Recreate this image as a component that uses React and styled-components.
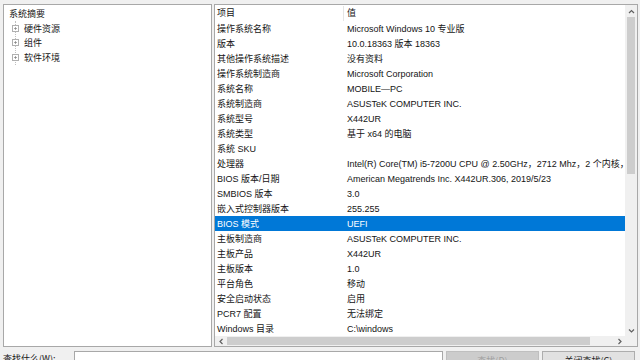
import styled, { createGlobalStyle } from "styled-components";

const GlobalStyle = createGlobalStyle`
  html, body {
    margin: 0;
    padding: 0;
    background: #f0f0f0;
    overflow: hidden;
  }
  body {
    font-family: "Liberation Sans", "Noto Sans CJK SC", sans-serif;
    font-size: 9px;
    color: #141414;
  }
`;

const rows = [
  ["操作系统名称", "Microsoft Windows 10 专业版"],
  ["版本", "10.0.18363 版本 18363"],
  ["其他操作系统描述", "没有资料"],
  ["操作系统制造商", "Microsoft Corporation"],
  ["系统名称", "MOBILE—PC"],
  ["系统制造商", "ASUSTeK COMPUTER INC."],
  ["系统型号", "X442UR"],
  ["系统类型", "基于 x64 的电脑"],
  ["系统 SKU", ""],
  ["处理器", "Intel(R) Core(TM) i5-7200U CPU @ 2.50GHz，2712 Mhz，2 个内核，4 个逻辑处理器"],
  ["BIOS 版本/日期", "American Megatrends Inc. X442UR.306, 2019/5/23"],
  ["SMBIOS 版本", "3.0"],
  ["嵌入式控制器版本", "255.255"],
  ["BIOS 模式", "UEFI"],
  ["主板制造商", "ASUSTeK COMPUTER INC."],
  ["主板产品", "X442UR"],
  ["主板版本", "1.0"],
  ["平台角色", "移动"],
  ["安全启动状态", "启用"],
  ["PCR7 配置", "无法绑定"],
  ["Windows 目录", "C:\\windows"],
];

const treeItems = ["硬件资源", "组件", "软件环境"];

const chevrons = {
  up: "M2 6 L4.5 3.5 L7 6",
  down: "M2 3.5 L4.5 6 L7 3.5",
  left: "M5.5 2 L3 4.5 L5.5 7",
  right: "M3.5 2 L6 4.5 L3.5 7",
};

function ScrollArrow({ dir }) {
  return (
    <Arrow>
      <svg width="9" height="9" viewBox="0 0 9 9">
        <path d={chevrons[dir]} fill="none" stroke="#606060" strokeWidth="1.2" />
      </svg>
    </Arrow>
  );
}

export default function App() {
  return (
    <Window>
      <GlobalStyle />
      <Main>
        <TreePanel>
          <TreeRoot>系统摘要</TreeRoot>
          <TreeChildren>
            {treeItems.map((t) => (
              <TreeRow key={t}>
                <Expander>
                  <svg width="5" height="5" viewBox="0 0 5 5">
                    <path d="M0 2.5 H5 M2.5 0 V5" stroke="#707070" strokeWidth="1" />
                  </svg>
                </Expander>
                <TreeLabel>{t}</TreeLabel>
              </TreeRow>
            ))}
          </TreeChildren>
        </TreePanel>

        <ListPanel>
          <ListBody>
            <Table>
              <HeaderRow>
                <NameCell>项目</NameCell>
                <HeaderValue>值</HeaderValue>
              </HeaderRow>
              {rows.map(([name, value]) => (
                <Row key={name} $selected={name === "BIOS 模式"}>
                  <NameCell>{name}</NameCell>
                  <ValueCell>{value}</ValueCell>
                </Row>
              ))}
            </Table>
            <VScroll>
              <ScrollArrow dir="up" />
              <VTrack>
                <VThumb />
              </VTrack>
              <ScrollArrow dir="down" />
            </VScroll>
          </ListBody>
          <HScrollRow>
            <HScroll>
              <ScrollArrow dir="left" />
              <HTrack>
                <HThumb />
              </HTrack>
              <ScrollArrow dir="right" />
            </HScroll>
            <Corner />
          </HScrollRow>
        </ListPanel>
      </Main>

      <FindBar>
        <FindLabel>查找什么(W):</FindLabel>
        <FindInput />
        <FindButton $disabled>查找(D)</FindButton>
        <FindButton>关闭查找(C)</FindButton>
      </FindBar>
    </Window>
  );
}

const Window = styled.div`
  width: 640px;
  height: 360px;
  background: #f0f0f0;
  display: flex;
  flex-direction: column;
  overflow: hidden;
`;

const Main = styled.div`
  display: flex;
  gap: 2px;
  padding: 4px 2px 0 3px;
  height: 347px;
  box-sizing: border-box;
  flex-shrink: 0;
`;

const TreePanel = styled.div`
  width: 209px;
  flex-shrink: 0;
  background: #fff;
  border: 1px solid #a8a8a8;
  box-sizing: border-box;
  padding: 1px 0 0 3px;
  font-family: "Noto Sans CJK SC", sans-serif;
`;

const TreeRoot = styled.div`
  height: 15px;
  line-height: 15px;
  padding-left: 2px;
`;

const TreeChildren = styled.div`
  margin-left: 8px;
  border-left: 1px dotted #c0c0c0;
  width: 60px;
`;

const TreeRow = styled.div`
  display: flex;
  align-items: center;
  height: 14.5px;
  margin-left: -4px;
`;

const Expander = styled.span`
  width: 7px;
  height: 7px;
  border: 1px solid #b0b0b0;
  background: #fff;
  box-sizing: border-box;
  display: flex;
  align-items: center;
  justify-content: center;
  flex-shrink: 0;
  svg {
    width: 3px;
    height: 3px;
  }
`;

const TreeLabel = styled.span`
  margin-left: 5px;
  line-height: 15px;
`;

const ListPanel = styled.div`
  flex: 1;
  display: flex;
  flex-direction: column;
  background: #fff;
  border: 1px solid #a8a8a8;
  box-sizing: border-box;
  min-width: 0;
`;

const ListBody = styled.div`
  flex: 1;
  display: flex;
  min-height: 0;
`;

const Table = styled.div`
  flex: 1;
  overflow: hidden;
  min-width: 0;
`;

const Row = styled.div`
  display: grid;
  grid-template-columns: 128px 1fr;
  height: 15px;
  box-sizing: border-box;
  padding-top: 1px;
  line-height: 14px;
  white-space: nowrap;
  background: ${(p) => (p.$selected ? "#0078d7" : "transparent")};
  color: ${(p) => (p.$selected ? "#fff" : "#141414")};
`;

const HeaderRow = styled(Row)`
  height: 16px;
  line-height: 15px;
`;

const NameCell = styled.div`
  padding-left: 2px;
  overflow: hidden;
`;

const ValueCell = styled.div`
  padding-left: 4px;
  overflow: hidden;
`;

const HeaderValue = styled(ValueCell)`
  border-left: 1px solid #e5e5e5;
  padding-left: 3px;
`;

const VScroll = styled.div`
  width: 12px;
  display: flex;
  flex-direction: column;
  background: #f0f0f0;
  flex-shrink: 0;
`;

const Arrow = styled.div`
  width: 12px;
  height: 12px;
  flex-shrink: 0;
  display: flex;
  align-items: center;
  justify-content: center;
`;

const VTrack = styled.div`
  flex: 1;
  padding: 0 2px;
`;

const VThumb = styled.div`
  height: 157px;
  background: #cdcdcd;
`;

const HScrollRow = styled.div`
  display: flex;
  height: 10px;
  flex-shrink: 0;
`;

const HScroll = styled.div`
  flex: 1;
  display: flex;
  align-items: center;
  background: #f0f0f0;
`;

const HTrack = styled.div`
  flex: 1;
  height: 100%;
  padding: 1px 0;
  box-sizing: border-box;
`;

const HThumb = styled.div`
  width: 363px;
  height: 100%;
  background: #cdcdcd;
`;

const Corner = styled.div`
  width: 12px;
  background: #f0f0f0;
`;

const FindBar = styled.div`
  display: flex;
  align-items: flex-start;
  padding: 4px 4px 0 3px;
`;

const FindLabel = styled.div`
  width: 71px;
  font-family: "Noto Sans CJK SC", sans-serif;
  line-height: 11px;
  padding-top: 2px;
  flex-shrink: 0;
`;

const FindInput = styled.div`
  width: 369px;
  height: 22px;
  background: #fff;
  border: 1px solid #a8a8a8;
  box-sizing: border-box;
`;

const FindButton = styled.div`
  width: 93px;
  height: 22px;
  margin-left: 3px;
  border: 1px solid ${(p) => (p.$disabled ? "#bfbfbf" : "#adadad")};
  background: ${(p) => (p.$disabled ? "#cccccc" : "#e1e1e1")};
  color: ${(p) => (p.$disabled ? "#a0a0a0" : "#1b1b1b")};
  box-sizing: border-box;
  text-align: center;
  padding-top: 3px;
  line-height: 11px;
  font-family: "Noto Sans CJK SC", sans-serif;
  &:first-of-type {
    margin-left: 4px;
  }
`;
